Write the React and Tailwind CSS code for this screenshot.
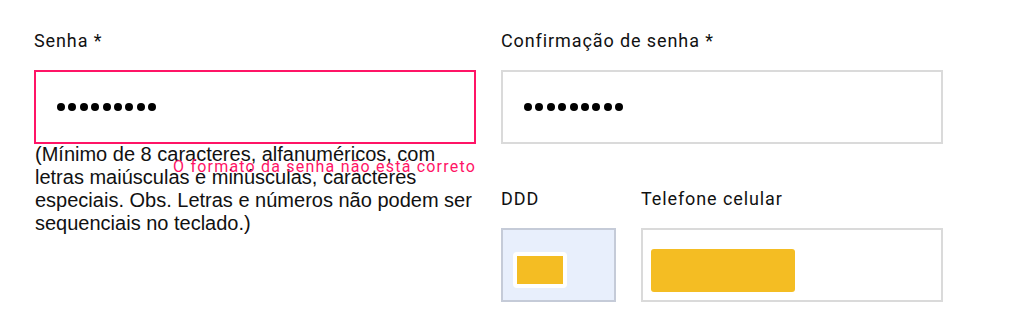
import React from "react";

function Dots() {
  return (
    <div className="flex items-center gap-[3.4px]">
      {Array.from({ length: 9 }).map((_, i) => (
        <span key={i} className="block w-[8px] h-[8px] rounded-full bg-black" />
      ))}
    </div>
  );
}

const label = "h-[40px] text-[18px] leading-[22px] tracking-[0.9px] font-['Roboto',sans-serif] text-[#111]";

export default function App() {
  return (
    <div className="w-[1026px] h-[328px] bg-white text-black flex pl-[34px] pt-[30px] gap-[25px]">
      <div className="w-[442px] flex flex-col">
        <div className={label}>Senha *</div>
        <div className="relative">
          <div className="h-[74px] border-2 border-[#ff1466] flex items-center pl-[21px]">
            <Dots />
          </div>
          <p className="-mt-[1px] pl-[1px] text-[20px] leading-[23px] font-['Liberation_Sans',Arial,sans-serif] text-[#111]">
            (Mínimo de 8 caracteres, alfanuméricos, com letras maiúsculas e minúsculas, caracteres especiais. Obs. Letras e números não podem ser sequenciais no teclado.)
          </p>
          <div className="absolute right-0 top-[88px] text-[16px] leading-[18px] font-['Roboto',sans-serif] text-[#ff1466] tracking-[1.2px] whitespace-nowrap">
            O formato da senha não está correto
          </div>
        </div>
      </div>
      <div className="w-[442px] flex flex-col">
        <div className={label}>Confirmação de senha *</div>
        <div className="h-[74px] border-2 border-[#dadada] flex items-center pl-[21px]">
          <Dots />
        </div>
        <div className="flex gap-[25px] mt-[44px]">
          <div className="w-[115px] flex flex-col">
            <div className={label}>DDD</div>
            <div className="h-[74px] border-2 border-[#c5cbd8] bg-[#e8effc] flex items-center pl-[10px] pt-[10px]">
              <div className="relative w-[54px] h-[36px] rounded-[4px] bg-white p-[4px]">
                <div className="w-full h-full bg-[#f4bd23]" />
              </div>
            </div>
          </div>
          <div className="w-[302px] flex flex-col">
            <div className={label}>Telefone celular</div>
            <div className="h-[74px] border-2 border-[#dadada] flex items-center pl-[8px] pt-[11px]">
              <div className="w-[144px] h-[43px] rounded-[3px] bg-[#f4bd23]" />
            </div>
          </div>
        </div>
      </div>
    </div>
  );
}
